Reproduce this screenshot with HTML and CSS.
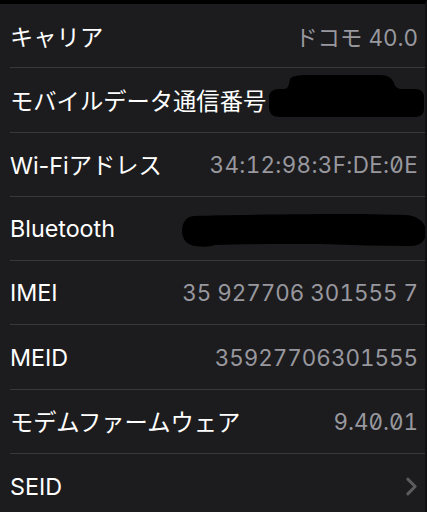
FILE: index.html
```html
<!DOCTYPE html>
<html lang="ja">
<head>
<meta charset="utf-8">
<link rel="stylesheet" href="styles.css">
</head>
<body>
<div class="screen">
  <div class="list">
    <div class="row"><div class="row-inner"><span class="label">キャリア</span><span class="value">ドコモ 40.0</span></div></div>
    <div class="row"><div class="row-inner"><span class="label">モバイルデータ通信番号</span>
      <svg class="blob blob-phone" viewBox="0 0 157 43" aria-hidden="true"><path d="M22 4 C24 1 30 0 40 0 L112 0 C120 0 124 3 126 8 C127 12 130 14 134 14 L147 14 C153 14 156 17 156 22 L156 34 C156 40 152 42 146 42 L12 42 C5 42 1 39 1 32 L1 22 C1 17 5 14 11 14 L16 14 C20 14 21 10 22 4 Z" fill="#000"/></svg>
    </div></div>
    <div class="row"><div class="row-inner"><span class="label">Wi-Fiアドレス</span><span class="value mono mac">34:12:98:3F:DE:0E</span></div></div>
    <div class="row"><div class="row-inner"><span class="label">Bluetooth</span>
      <svg class="blob blob-bt" viewBox="0 0 246 34" aria-hidden="true"><path d="M14 2 C40 1 120 0 180 0 L226 1 C236 2 244 8 245 16 C246 26 240 32 230 32 C200 32 170 31 140 30 C100 30 60 30 34 31 C28 33 22 33 14 32 C6 31 1 25 1 17 C1 8 6 2 14 2 Z" fill="#000"/></svg>
    </div></div>
    <div class="row"><div class="row-inner"><span class="label">IMEI</span><span class="value">35 927706 301555 7</span></div></div>
    <div class="row"><div class="row-inner"><span class="label">MEID</span><span class="value">35927706301555</span></div></div>
    <div class="row"><div class="row-inner"><span class="label">モデムファームウェア</span><span class="value mono">9.40.01</span></div></div>
    <div class="row"><div class="row-inner"><span class="label">SEID</span>
      <svg class="chevron" viewBox="0 0 12 18" aria-hidden="true"><path d="M2.5 2 L9.5 9 L2.5 16" fill="none" stroke="#5b5b60" stroke-width="2.8" stroke-linecap="round" stroke-linejoin="round"/></svg>
    </div></div>
  </div>
</div>
</body>
</html>
```
FILE: styles.css
```css
html, body {
  margin: 0;
  padding: 0;
  background: #1c1c1e;
}
.screen {
  width: 427px;
  height: 512px;
  overflow: hidden;
  background: #1c1c1e;
  border-top: 4px solid #000;
  box-sizing: border-box;
  border-right: 2px solid #111113;
  font-family: Inter, "Noto Sans CJK JP", sans-serif;
}
.list {
  display: flex;
  flex-direction: column;
}
.row {
  padding-left: 10px;
}
.row-inner {
  position: relative;
  height: 64.3px;
  box-sizing: border-box;
  border-bottom: 1px solid #38383a;
  display: flex;
  align-items: center;
  justify-content: space-between;
  padding-right: 7px;
}
.row:last-child .row-inner {
  border-bottom: none;
}
.label {
  color: #ffffff;
  font-size: 23.3px;
}
.value {
  color: #98989e;
  font-size: 22.4px;
  font-feature-settings: "tnum";
}
.value.mono {
  font-feature-settings: "tnum", "zero";
}
.value.mac {
  letter-spacing: 0.35px;
}
.blob {
  position: absolute;
}
.blob-phone {
  left: 258px;
  top: 7px;
  width: 157px;
  height: 43px;
}
.blob-bt {
  left: 171px;
  top: 17px;
  width: 246px;
  height: 34px;
}
.chevron {
  width: 13px;
  height: 19px;
  margin-right: 0;
}
```
